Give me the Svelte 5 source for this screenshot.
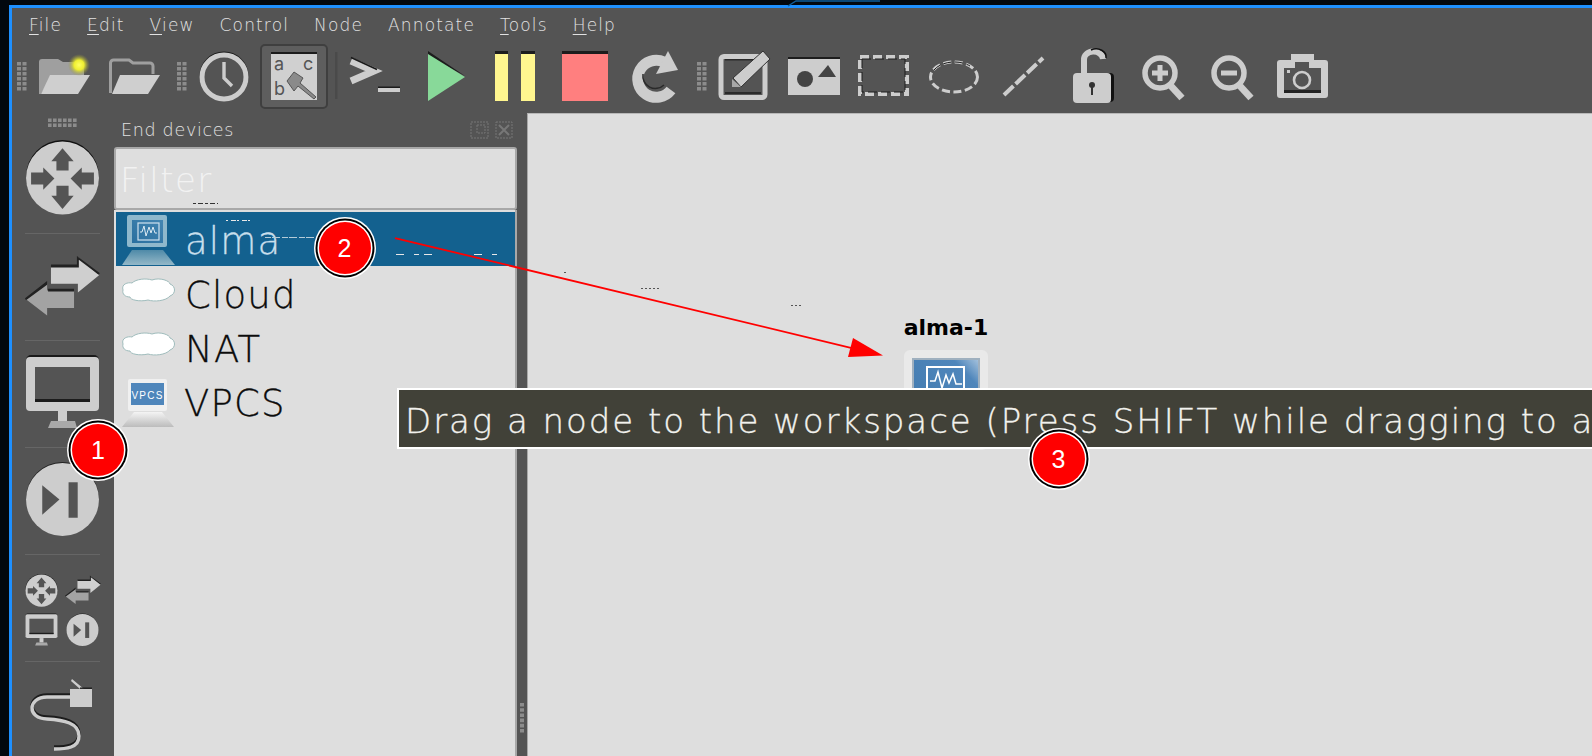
<script>
  const menu = [
    { k: 'F', r: 'ile' }, { k: 'E', r: 'dit' }, { k: 'V', r: 'iew' },
    { k: '', r: 'Control' }, { k: '', r: 'Node' }, { k: '', r: 'Annotate' },
    { k: 'T', r: 'ools' }, { k: 'H', r: 'elp' }
  ];
  const badges = [
    { n: 1, cls: 'b1' }, { n: 2, cls: 'b2' }, { n: 3, cls: 'b3' }
  ];
</script>

{#snippet routerIcon()}
  <svg class="fill" viewBox="26 140 74 76">
    <circle cx="63" cy="178" r="36" fill="#111"/>
    <circle cx="63" cy="179.5" r="36" fill="#cdcdcd"/>
    <g fill="#545454">
      <path d="M63 150 L74 163 H69 V172 H57 V163 H52 Z"/>
      <path d="M63 210 L74 197 H69 V187 H57 V197 H52 Z"/>
      <path d="M55 180 L44 169 V174 H32 V186 H44 V191 Z"/>
      <path d="M71 180 L82 169 V174 H94 V186 H82 V191 Z"/>
    </g>
  </svg>
{/snippet}

{#snippet switchIcon()}
  <svg class="fill" viewBox="24 253 78 66">
    <path d="M79 255 L101 274 L79 292 V283 H51 V265 H79 Z" fill="#cfcfcf"/>
    <path d="M51 263 H78 V254 L102 272 L100 273 L80 258 V266 H51 Z" fill="#222"/>
    <path d="M47 283 V290 H75 V308 H47 V316 L25 299 Z" fill="#a3a3a3"/>
    <path d="M47 280 V284 L25 300 L24 298 Z M48 288 H75 V291 H48 Z" fill="#222"/>
  </svg>
{/snippet}

{#snippet monitorIcon()}
  <svg class="fill" viewBox="26 354 75 75">
    <rect x="27" y="355" width="73" height="55" rx="5" fill="#1a1a1a"/>
    <rect x="27" y="357" width="73" height="54" rx="4" fill="#cdcdcd"/>
    <rect x="36" y="367" width="55" height="35" fill="#545454"/>
    <rect x="36" y="399" width="55" height="3" fill="#1c1c1c"/>
    <rect x="59" y="411" width="9" height="10" fill="#cdcdcd"/>
    <path d="M52 421 H76 L78 428 H49 Z" fill="#a9a9a9"/>
  </svg>
{/snippet}

{#snippet nextIcon()}
  <svg class="fill" viewBox="26 461 74 75">
    <circle cx="63" cy="498" r="36" fill="#222"/>
    <circle cx="63" cy="499" r="36" fill="#cdcdcd"/>
    <path d="M43 485 L60 499 L43 514 Z" fill="#545454"/>
    <rect x="69" y="482" width="9" height="35" fill="#545454"/>
  </svg>
{/snippet}

{#snippet grip(x, y, n)}
  <path d="M{x + 2} {y} v{n} M{x + 7.5} {y} v{n}" stroke="#8c8c8c" stroke-width="4" stroke-dasharray="3.6 1.4" fill="none"/>
{/snippet}

<div class="page">
  <svg class="notch" viewBox="0 0 1592 6" aria-hidden="true">
    <path d="M788 6 L796 1 H880" stroke="#0f5d9a" stroke-width="1.4" fill="none"/>
  </svg>

  <div class="window">
    <nav class="menubar">
      {#each menu as m}
        <span class="mi"><u>{m.k}</u>{m.r}</span>
      {/each}
    </nav>

    <div class="toolbar">
      <svg viewBox="12 42 23 70">{@render grip(17, 62, 30)}</svg>

      <svg viewBox="35 42 65 70">
        <defs>
          <radialGradient id="glow">
            <stop offset="0" stop-color="#ffff60"/>
            <stop offset=".45" stop-color="#eeee30"/>
            <stop offset="1" stop-color="#8f8f40" stop-opacity="0"/>
          </radialGradient>
        </defs>
        <path d="M39 94 V62 a3 3 0 0 1 3-3 H58 l5 3 H84 V75 H52 L41 94 Z" fill="#9f9f9f"/>
        <path d="M50 75 H90 L78 94 H41 Z" fill="#cfcfcf"/>
        <circle cx="79" cy="65" r="11" fill="url(#glow)"/>
      </svg>

      <svg viewBox="100 42 70 70">
        <path d="M110.5 93 V63 a3 3 0 0 1 3-3 H129 l4 3 H150 a3 3 0 0 1 3 3 V74" stroke="#9f9f9f" stroke-width="3" fill="none"/>
        <path d="M120 75 H160 L148 94 H112 Z" fill="#cfcfcf"/>
      </svg>

      <svg viewBox="170 42 22 70">{@render grip(177, 62, 30)}</svg>

      <svg viewBox="192 42 63 70">
        <circle cx="224" cy="76" r="22" stroke="#1d1d1d" stroke-width="5" fill="none"/>
        <circle cx="224" cy="77" r="22" stroke="#cdcdcd" stroke-width="5" fill="#545454"/>
        <path d="M224 62 V78 L232 86" stroke="#cdcdcd" stroke-width="3.4" fill="none"/>
      </svg>

      <div class="active">
        <svg viewBox="261 45 67 64">
          <rect x="271" y="52" width="46" height="2" fill="#1c1c1c"/>
          <rect x="271" y="54" width="46" height="46" fill="#d0d0d0"/>
          <path d="M287 81 L294 72 L303 78 L300 83 L316 97 L314 99 L298 86 L294 91 Z" fill="#8a8a8a" stroke="#555" stroke-width="1"/>
        </svg>
        <span class="lt a">a</span><span class="lt c">c</span><span class="lt b">b</span>
      </div>

      <svg viewBox="332 42 10 70"><rect x="335" y="52" width="2.5" height="47" fill="#4a4a4a"/></svg>

      <svg viewBox="342 42 68 70">
        <path d="M351 61 L374 71 L351 81" stroke="#cdcdcd" stroke-width="7" fill="none"/>
        <path d="M351 57.5 L377 69.5" stroke="#1a1a1a" stroke-width="1.5" fill="none"/>
        <rect x="378" y="86.5" width="22" height="1.5" fill="#1c1c1c"/>
        <rect x="378" y="88" width="22" height="4" fill="#cdcdcd"/>
      </svg>

      <svg viewBox="410 42 70 70">
        <path d="M428 51 L465 76 L428 56 Z" fill="#1d1d1d"/>
        <path d="M428 54 L465 77 L428 101 Z" fill="#88d999"/>
      </svg>

      <svg viewBox="480 42 65 70">
        <rect x="495" y="51" width="13" height="3" fill="#1d1d1d"/>
        <rect x="495" y="54" width="13" height="47" fill="#fff68f"/>
        <rect x="521" y="51" width="14" height="3" fill="#1d1d1d"/>
        <rect x="521" y="54" width="14" height="47" fill="#fff68f"/>
      </svg>

      <svg viewBox="545 42 70 70">
        <rect x="562" y="51" width="46" height="3" fill="#1d1d1d"/>
        <rect x="562" y="54" width="46" height="47" fill="#ff7f7f"/>
      </svg>

      <svg viewBox="615 42 75 70">
        <path d="M671 90 A 18.5 18.5 0 1 1 664 62" stroke="#cdcdcd" stroke-width="11" fill="none"/>
        <path d="M668 51 L678 70 L656 74 Z" fill="#cdcdcd"/>
        <path d="M643 74 A 12.5 12.5 0 0 0 664 85" stroke="#2a2a2a" stroke-width="1.5" fill="none"/>
      </svg>

      <svg viewBox="690 42 22 70">{@render grip(697, 62, 30)}</svg>

      <svg viewBox="712 42 68 70">
        <rect x="721" y="56.5" width="44" height="41" rx="3" stroke="#cdcdcd" stroke-width="5" fill="none"/>
        <rect x="725" y="59" width="36" height="1.5" fill="#2a2a2a"/>
        <rect x="725" y="92" width="36" height="2" fill="#2a2a2a"/>
        <path d="M733 78 L763 51 L770 59 L741 87 Z" fill="#cdcdcd" stroke="#333" stroke-width="1"/>
        <path d="M732 79 L741 87 L732 87 Z" fill="#a8a8a8"/>
      </svg>

      <svg viewBox="780 42 70 70">
        <rect x="788" y="57" width="52" height="2" fill="#1d1d1d"/>
        <rect x="788" y="59" width="52" height="36" fill="#cdcdcd"/>
        <circle cx="805" cy="79" r="8" fill="#444"/>
        <path d="M828 65 L836 77 H818 Z" fill="#444"/>
      </svg>

      <svg viewBox="850 42 70 70">
        <rect x="860" y="57" width="47" height="37" stroke="#cdcdcd" stroke-width="4" stroke-dasharray="9 4" fill="none"/>
        <rect x="862" y="59" width="43" height="33" stroke="#1d1d1d" stroke-width="1" stroke-dasharray="9 4" fill="none"/>
      </svg>

      <svg viewBox="920 42 70 70">
        <ellipse cx="954" cy="77" rx="23.5" ry="15" stroke="#cdcdcd" stroke-width="3" stroke-dasharray="8 3.5" fill="none"/>
        <path d="M934 70 A 23 15 0 0 1 970 66" stroke="#1d1d1d" stroke-width="1" stroke-dasharray="8 3.5" fill="none"/>
      </svg>

      <svg viewBox="990 42 66 70">
        <path d="M1004 95 L1043 58" stroke="#cdcdcd" stroke-width="4" stroke-dasharray="13 3" fill="none"/>
      </svg>

      <svg viewBox="1056 42 74 70">
        <path d="M1084 76 V60 a9.5 8 0 0 1 19 -1" stroke="#cdcdcd" stroke-width="6" fill="none"/>
        <path d="M1091 50 a10 8 0 0 1 15 8" stroke="#111" stroke-width="1.5" fill="none"/>
        <rect x="1076" y="73" width="38" height="29" rx="4" fill="#111"/>
        <rect x="1073" y="73" width="38" height="30" rx="4" fill="#cdcdcd"/>
        <circle cx="1092" cy="85" r="3" fill="#333"/>
        <rect x="1091" y="85" width="2" height="10" fill="#333"/>
      </svg>

      <svg viewBox="1130 42 67 70">
        <circle cx="1160" cy="73" r="15" stroke="#cdcdcd" stroke-width="5.5" fill="#545454"/>
        <path d="M1171 86 L1182 98" stroke="#cdcdcd" stroke-width="7"/>
        <path d="M1160 65 V81 M1152 73 H1168" stroke="#cdcdcd" stroke-width="5"/>
      </svg>

      <svg viewBox="1197 42 68 70">
        <circle cx="1229" cy="73" r="15" stroke="#cdcdcd" stroke-width="5.5" fill="#545454"/>
        <path d="M1240 86 L1251 98" stroke="#cdcdcd" stroke-width="7"/>
        <path d="M1221 73 H1237" stroke="#cdcdcd" stroke-width="5"/>
      </svg>

      <svg viewBox="1265 42 75 70">
        <path d="M1280 60 H1291 V54 H1314 V60 H1325 a3 3 0 0 1 3 3 V95 a3 3 0 0 1-3 3 H1280 a3 3 0 0 1-3-3 V63 a3 3 0 0 1 3-3 Z" fill="#cdcdcd"/>
        <path d="M1284 68 H1295 V62 H1309 V68 H1321 V90 H1284 Z" fill="#545454"/>
        <rect x="1284" y="90" width="37" height="3" fill="#222"/>
        <circle cx="1302" cy="80" r="8" stroke="#cdcdcd" stroke-width="2.6" fill="none"/>
        <rect x="1287" y="70" width="3" height="3" fill="#cdcdcd"/>
      </svg>
    </div>

    <div class="main">
      <aside class="side">
        <div class="sec first">
          <svg class="sidegrip" viewBox="0 0 30 10">
            <path d="M0 2.2 H30 M0 7.2 H30" stroke="#8c8c8c" stroke-width="3.6" stroke-dasharray="3.6 1.4" fill="none"/>
          </svg>
          <div class="big r">{@render routerIcon()}</div>
        </div>
        <div class="sec"><div class="big sw">{@render switchIcon()}</div></div>
        <div class="sec"><div class="big mon">{@render monitorIcon()}</div></div>
        <div class="sec"><div class="big nx">{@render nextIcon()}</div></div>
        <div class="sec">
          <div class="mini">
            <div>{@render routerIcon()}</div>
            <div>{@render switchIcon()}</div>
            <div>{@render monitorIcon()}</div>
            <div class="mnx">{@render nextIcon()}</div>
          </div>
        </div>
        <div class="sec">
          <svg class="cable" viewBox="26 676 74 78">
            <path d="M70 694 H47 C27 694 27 716 47 716 C64 717 79 720 79 733 C79 745 66 746 54 746" stroke="#1c1c1c" stroke-width="3.4" fill="none"/>
            <path d="M70 696 H47 C27 696 27 718 47 718 C64 719 79 722 79 735 C79 747 66 748 54 748" stroke="#cdcdcd" stroke-width="3.4" fill="none"/>
            <path d="M72 678 L84 688 H92 V706 H70 V688 H80 L71 680 Z" fill="#cdcdcd"/>
            <rect x="80" y="686.5" width="12" height="1.4" fill="#1c1c1c"/>
          </svg>
        </div>
      </aside>

      <section class="dock">
        <header class="dockhead">
          <span>End devices</span>
          <svg class="dockbtns" viewBox="0 0 44 18">
            <rect x="1" y="1" width="17" height="16" fill="none" stroke="#777" stroke-dasharray="2 1"/>
            <rect x="7" y="4" width="8" height="8" fill="none" stroke="#777" stroke-dasharray="2 1"/>
            <rect x="26" y="1" width="16" height="16" fill="none" stroke="#777" stroke-dasharray="2 1"/>
            <path d="M29 4 L39 14 M39 4 L29 14" stroke="#777" stroke-width="2"/>
          </svg>
        </header>
        <div class="filter">Filter</div>
        <ul class="list">
          <li class="sel">
            <svg viewBox="0 0 70 54" class="ico">
              <defs>
                <linearGradient id="selbase" x1="0" y1="0" x2="0" y2="1">
                  <stop offset="0" stop-color="#4f8aa8"/><stop offset="1" stop-color="#94b8c8"/>
                </linearGradient>
                <linearGradient id="selscreen" x1="0" y1="1" x2="1" y2="0">
                  <stop offset="0" stop-color="#2a6f9f"/><stop offset="1" stop-color="#4486b2"/>
                </linearGradient>
              </defs>
              <rect x="11" y="3" width="40" height="32" rx="2" fill="#8fb8cc"/>
              <rect x="16" y="8" width="31" height="23" fill="url(#selscreen)"/>
              <rect x="22" y="11" width="21" height="17" fill="none" stroke="#cfe2ee" stroke-width="1.2"/>
              <path d="M24 20 H26 L28 14 L30 24 L33 15 L35 21 L37 15 L39 21 H41" fill="none" stroke="#dbe9f2"/>
              <path d="M16 38 H47 L59 53 H6 Z" fill="url(#selbase)"/>
            </svg>
            <span>alma</span>
          </li>
          <li>
            <svg viewBox="0 0 70 54" class="ico">
              <path d="M7 24 C5 18 12 16 16 17 C20 13 30 12 36 14 C44 11 54 15 54 18 C60 20 60 28 54 30 C50 35 38 36 32 34 C24 36 14 34 14 31 C9 31 6 28 7 24 Z" fill="#fff" stroke="#9fbcbc"/>
            </svg>
            <span>Cloud</span>
          </li>
          <li>
            <svg viewBox="0 0 70 54" class="ico">
              <path d="M7 24 C5 18 12 16 16 17 C20 13 30 12 36 14 C44 11 54 15 54 18 C60 20 60 28 54 30 C50 35 38 36 32 34 C24 36 14 34 14 31 C9 31 6 28 7 24 Z" fill="#fff" stroke="#9fbcbc"/>
            </svg>
            <span>NAT</span>
          </li>
          <li>
            <svg viewBox="0 0 70 54" class="ico">
              <defs>
                <linearGradient id="vbase" x1="0" y1="0" x2="0" y2="1">
                  <stop offset="0" stop-color="#f4f4f4"/><stop offset="1" stop-color="#bcbcbc"/>
                </linearGradient>
              </defs>
              <rect x="12" y="5" width="39" height="32" rx="2" fill="#f0f0f0"/>
              <rect x="15" y="9" width="33" height="22" fill="#4f86bb"/>
              <text x="31.5" y="24.5" class="vp" text-anchor="middle">VPCS</text>
              <path d="M18 38 H46 L58 53 H6 Z" fill="url(#vbase)"/>
            </svg>
            <span class="v">VPCS</span>
          </li>
        </ul>
      </section>

      <div class="splitter">
        <svg viewBox="0 0 4 30" class="splitgrip">
          <path d="M2 0 V30" stroke="#8c8c8c" stroke-width="4" stroke-dasharray="3.6 1.6"/>
        </svg>
      </div>

      <div class="canvas">
        <div class="node">
          <span class="nlabel">alma-1</span>
          <svg viewBox="0 0 84 100" class="nico">
            <defs>
              <linearGradient id="nscreen" x1="0" y1="1" x2="1" y2="0">
                <stop offset="0" stop-color="#3f78ad"/><stop offset=".8" stop-color="#4f86bb"/><stop offset="1" stop-color="#a8c4de"/>
              </linearGradient>
            </defs>
            <rect x="0" y="0" width="84" height="100" rx="6" fill="#e9e9e9"/>
            <rect x="9" y="9" width="66" height="70" fill="url(#nscreen)" stroke="#9fb0bf" stroke-width="2"/>
            <rect x="23" y="17" width="37" height="30" fill="none" stroke="#fff" stroke-width="2"/>
            <path d="M26 31 H31 L34 22 L38 38 L42 25 L45 33 L49 24 L52 34 H58" fill="none" stroke="#fff" stroke-width="1.5"/>
          </svg>
        </div>
      </div>
    </div>
  </div>

  <svg class="arrow" viewBox="0 0 1592 756" aria-hidden="true">
    <path d="M395 238 L856 349" stroke="#f00" stroke-width="1.8" fill="none"/>
    <path d="M883 355.5 L853 338 L848 357 Z" fill="#f00"/>
    <g fill="none" stroke-width="1">
      <path d="M193 203.5 H218" stroke="#333" stroke-dasharray="3 2 5 2"/>
      <path d="M226 220.5 H250" stroke="#e8e8e8" stroke-dasharray="2 3 5 1"/>
      <path d="M265 237.5 H315" stroke="#b4cbd8" stroke-dasharray="6 1 8 2"/>
      <path d="M396 254.5 H497" stroke="#e8e8e8" stroke-dasharray="8 10 5 5 8 42"/>
      <path d="M564 272.5 H567 M641 288.5 H660 M791 305.5 H802" stroke="#555" stroke-dasharray="2 2"/>
    </g>
  </svg>

  <div class="tooltip">Drag a node to the workspace (Press SHIFT while dragging to a</div>

  {#each badges as b}
    <div class="badge {b.cls}">{b.n}</div>
  {/each}
</div>

<style>
  :global(body) { margin: 0; background: #02080e; }
  .page {
    position: relative; width: 1592px; height: 756px; overflow: hidden;
    background: #02080e; font-family: "DejaVu Sans", Inter, sans-serif; font-weight: 200;
  }
  svg { display: block; overflow: visible; }
  .notch { position: absolute; left: 0; top: 0; width: 1592px; height: 6px; }
  .window {
    margin: 5px 0 0 9px; height: 751px; box-sizing: border-box;
    border-top: 3px solid #1e90ff; border-left: 3px solid #1e90ff;
    background: #545454; display: flex; flex-direction: column; overflow: hidden;
  }
  .menubar {
    height: 34px; flex: none; display: flex; align-items: center; gap: 25px;
    padding-left: 17px; padding-bottom: 1px; box-sizing: border-box;
    color: #e2e2e2; font-size: 17px; letter-spacing: 1.15px;
  }
  .mi u { text-underline-offset: 3px; }
  .toolbar {
    height: 71px; flex: none; display: grid; grid-template-rows: 70px;
    grid-template-columns: 23px 65px 70px 22px 63px 77px 10px 68px 70px 65px 70px 75px 22px 68px 70px 70px 70px 66px 74px 67px 68px 75px;
  }
  .toolbar > svg { width: 100%; height: 70px; }
  .active {
    position: relative; margin: 2px 4px 3px 5px; box-sizing: border-box;
    border: 2px solid #3f3f3f; border-radius: 5px; background: #5e5e5e;
  }
  .active svg { position: absolute; left: -1px; top: -1px; width: 67px; height: 64px; }
  .lt { position: absolute; color: #555; font-size: 18px; font-weight: 400; line-height: 18px; font-family: Inter, sans-serif; }
  .lt.a { left: 12px; top: 9px; }
  .lt.c { left: 41px; top: 9px; }
  .lt.b { left: 12px; top: 34px; }

  .main { flex: 1; display: flex; min-height: 0; }
  .side { width: 102px; flex: none; }
  .sec {
    height: 107px; margin: 0 14px 0 13px; box-sizing: border-box;
    border-top: 1px solid #666; display: flex; align-items: center; justify-content: center;
  }
  .sec.first { height: 120px; border-top: 0; flex-direction: column; justify-content: flex-start; padding-top: 5px; }
  .sidegrip { width: 30px; height: 10px; flex: none; }
  .big { width: 75px; }
  .big.r { margin-top: 10px; }
  .big.mon { margin-top: -5px; }
  .big.nx { margin-top: -5px; }
  .fill { width: 100%; height: auto; }
  .mini { display: grid; grid-template-columns: 33px 36px; gap: 6px 7px; width: 76px; margin-top: 3px; align-items: center; }
  .mnx { width: 33px; margin-left: 1px; }
  .cable { width: 74px; height: 78px; margin-top: 2px; }

  .dock { width: 403px; flex: none; display: flex; flex-direction: column; }
  .dockhead {
    height: 34px; flex: none; display: flex; align-items: center; justify-content: space-between;
    padding: 0 3px 0 7px; color: #e2e2e2; font-size: 17.5px; letter-spacing: 0.7px;
  }
  .dockbtns { width: 44px; height: 18px; }
  .filter {
    height: 63px; flex: none; box-sizing: border-box; background: #dedede;
    border: 2px solid #a8a8a8; border-radius: 3px; padding-left: 4px;
    color: #f2f2f2; font-size: 34px; line-height: 62px; letter-spacing: 1.4px;
  }
  .list {
    flex: 1; margin: 0; padding: 2px 0 0 2px; list-style: none; background: #dedede;
    border-right: 2px solid #a8a8a8;
  }
  .list li {
    height: 54px; display: flex; align-items: center; color: #0c0c0c;
    font-size: 37px; letter-spacing: 1.2px; -webkit-text-stroke: 0.3px currentColor;
  }
  .list li span { padding-top: 5px; }
  .list li.sel { background: #13618f; color: #c8dfec; }
  .ico { width: 70px; height: 54px; flex: none; margin-right: -1px; }
  .list .v { margin-left: -1px; }
  .vp { font: 400 10px "Liberation Sans", sans-serif; fill: #fff; stroke: none; }

  .splitter { width: 10px; flex: none; display: flex; justify-content: center; padding-top: 590px; box-sizing: border-box; }
  .splitgrip { width: 4px; height: 30px; }

  .canvas {
    flex: 1; position: relative; background: #dedede;
    border-top: 1px solid #b8b8b8; border-left: 1px solid #a8a8a8;
  }
  .node { position: absolute; left: 376px; top: 199px; width: 84px; }
  .nlabel {
    position: absolute; left: -15px; width: 114px; top: 2px; text-align: center;
    font: 700 22px "DejaVu Sans", sans-serif; color: #000;
  }
  .nico { position: absolute; top: 37px; left: 0; width: 84px; height: 100px; }

  .arrow { position: absolute; left: 0; top: 0; width: 1592px; height: 756px; pointer-events: none; }
  .tooltip {
    position: absolute; left: 397px; top: 388px; width: 1195px; height: 61px; box-sizing: border-box;
    background: #414138; border: 2px solid #fff; border-right: 0; padding-left: 6px; white-space: nowrap; overflow: hidden;
    color: #f2f2ee; font-size: 34px; line-height: 62px; letter-spacing: 1.95px; -webkit-text-stroke: 0.3px currentColor;
  }
  .badge {
    position: absolute; width: 52px; height: 52px; border-radius: 50%; background: #f00;
    box-shadow: 0 0 0 1.5px #fff, 0 0 0 3.5px #000, 0 0 0 5px #fff;
    color: #fff; font: 400 25px/52px "Liberation Sans", sans-serif; text-align: center;
  }
  .b1 { left: 72px; top: 424px; }
  .b2 { left: 318.5px; top: 222px; }
  .b3 { left: 1032.5px; top: 433px; }
</style>
